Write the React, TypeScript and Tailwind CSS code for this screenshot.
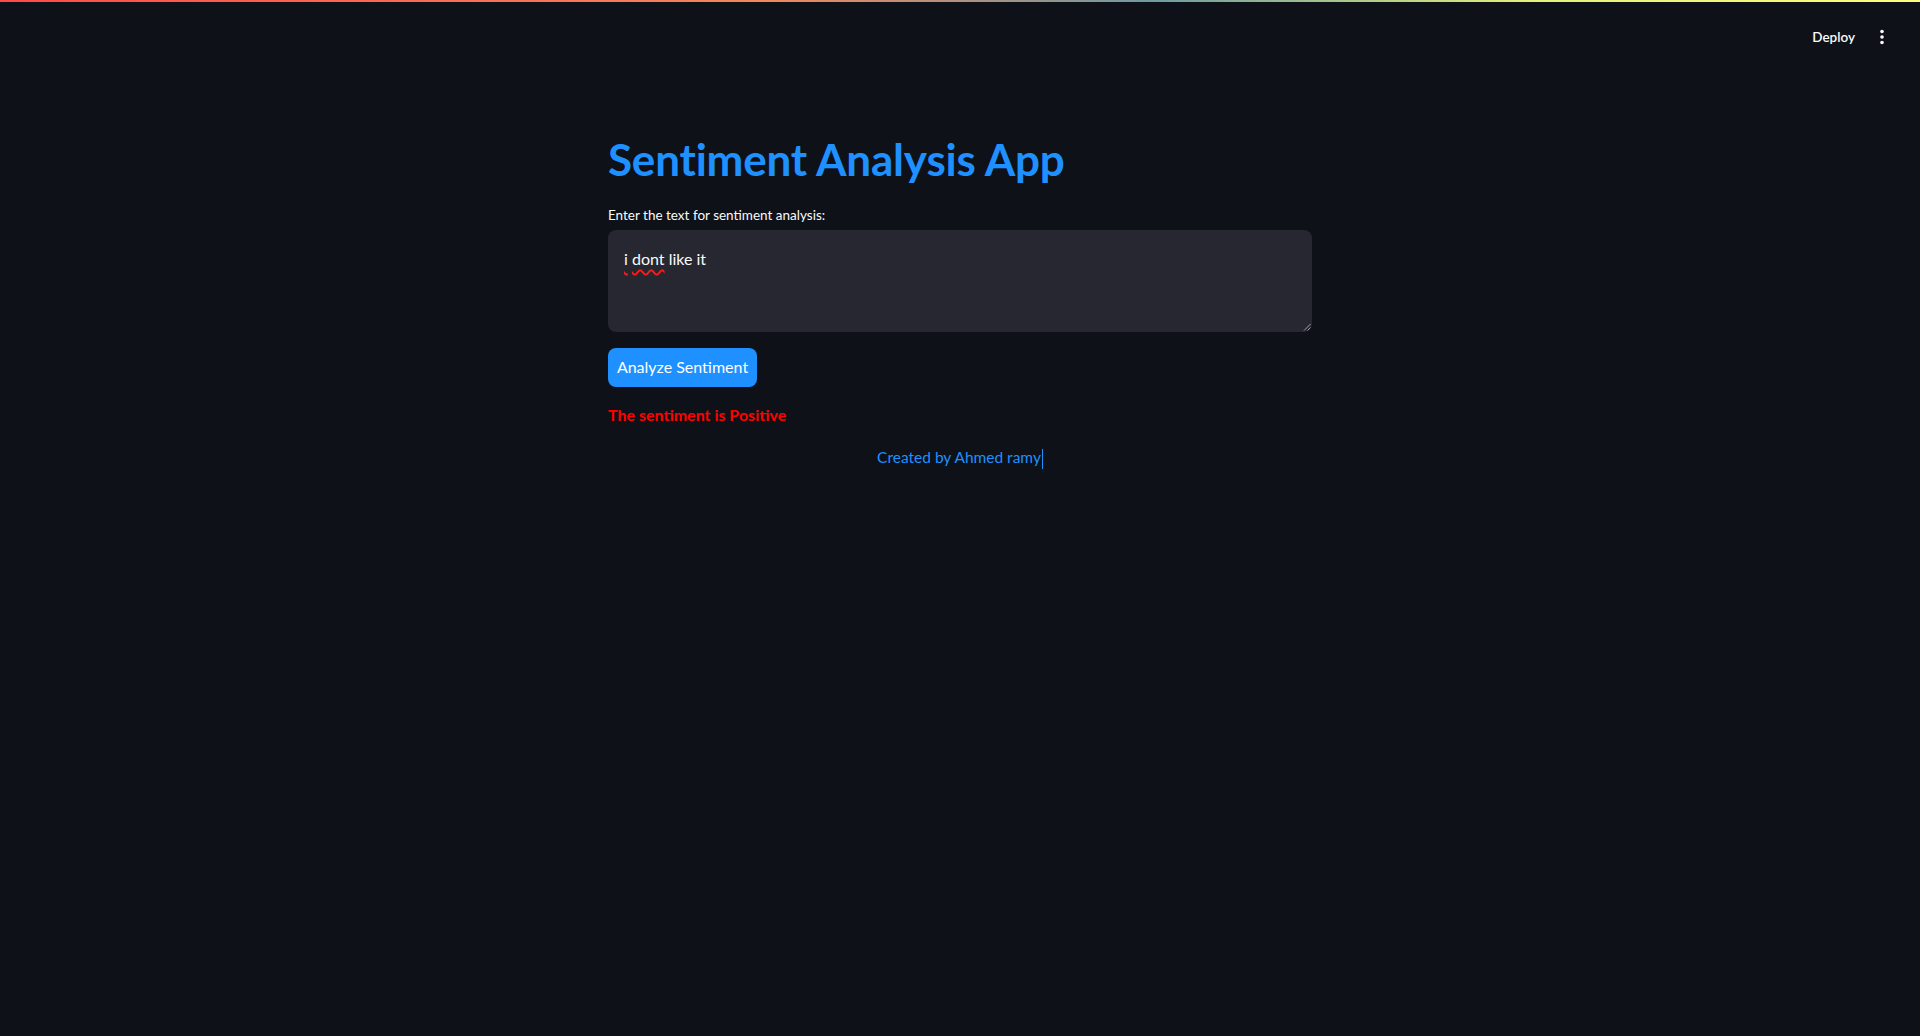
import React from "react";

export default function App() {
  return (
    <div className="min-h-screen bg-[#0e1117] text-[#fafafa] font-['Lato','Noto_Sans',sans-serif]">
      <div className="h-[2px] bg-[linear-gradient(90deg,#ff4b4b,#f2875f_40%,#6d9ba0_60%,#e6f27a_80%,#fffd80)]" />
      <header className="h-[70px] flex items-center justify-end pr-[36px]">
        <button className="text-[13.5px] font-semibold text-[#fafafa] mr-[25px]">Deploy</button>
        <svg width="4" height="16" viewBox="0 0 4 16" className="fill-[#fafafa]">
          <circle cx="2" cy="2.5" r="1.8" />
          <circle cx="2" cy="8" r="1.8" />
          <circle cx="2" cy="13.5" r="1.8" />
        </svg>
      </header>
      <main className="w-[704px] mx-auto pt-[61px]">
        <h1 className="text-[44px] leading-[1.2] font-bold text-[#1e90ff] tracking-[-0.2px]">
          Sentiment Analysis App
        </h1>
        <label className="block mt-[19px] mb-[5px] text-[13.5px] leading-[20px] text-[#fafafa]">
          Enter the text for sentiment analysis:
        </label>
        <div className="relative h-[102px] rounded-[8px] bg-[#262730] px-[16px] pt-[16px] text-[16px] leading-[25.6px] text-[#fafafa]">
          <span className="underline decoration-wavy decoration-[#ff1a1a] decoration-[1.5px] underline-offset-[4px]">i</span>{" "}
          <span className="underline decoration-wavy decoration-[#ff1a1a] decoration-[1.5px] underline-offset-[4px]">dont</span> like it
          <svg width="8" height="8" viewBox="0 0 8 8" className="absolute right-[1px] bottom-[1px] stroke-[#9a9aa3]">
            <line x1="1" y1="7.5" x2="7.5" y2="1" strokeWidth="1" />
            <line x1="4.5" y1="7.5" x2="7.5" y2="4.5" strokeWidth="1" />
          </svg>
        </div>
        <button className="mt-[16px] h-[39px] w-[149px] rounded-[8px] bg-[#1e90ff] text-[16px] text-white">
          Analyze Sentiment
        </button>
        <p className="mt-[16px] text-[16px] leading-[24px] font-bold text-[#ff0000]">
          The sentiment is Positive
        </p>
        <p className="mt-[18px] text-center text-[15.5px] leading-[24px] text-[#1e90ff]">
          Created by Ahmed ramy<span className="inline-block align-middle w-[1px] h-[20px] bg-[#1e90ff] ml-[1px]" />
        </p>
      </main>
    </div>
  );
}
